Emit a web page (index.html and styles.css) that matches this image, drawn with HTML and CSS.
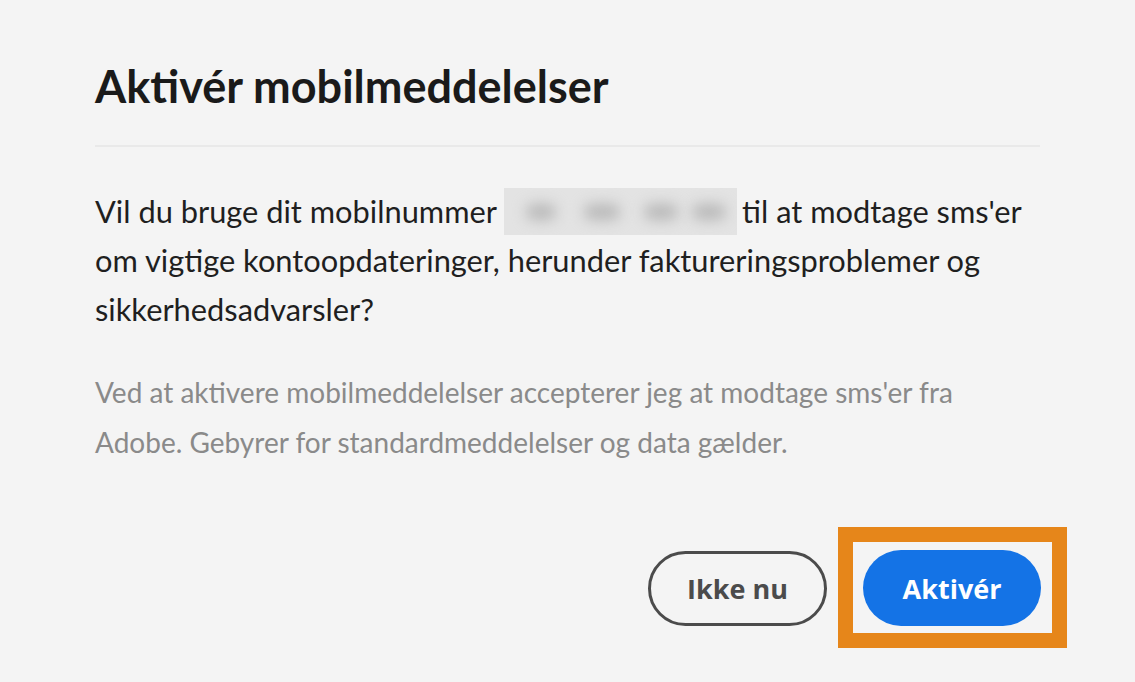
FILE: index.html
```html
<!DOCTYPE html>
<html lang="da">
<head>
    <meta charset="UTF-8">
    <meta name="viewport" content="width=device-width, initial-scale=1.0">
    <title>Aktivér mobilmeddelelser</title>
    <link rel="stylesheet" href="styles.css">
</head>
<body>
    <div class="dialog">
        <h1 class="dialog-title">Aktivér mobilmeddelelser</h1>
        <div class="divider"></div>
        <p class="dialog-text">
            Vil du bruge dit mobilnummer
            <span class="masked"><span class="blob b1"></span><span class="blob b2"></span><span class="blob b3"></span><span class="blob b4"></span></span>
            til at modtage sms'er om vigtige kontoopdateringer, herunder faktureringsproblemer og sikkerhedsadvarsler?
        </p>
        <p class="dialog-note">
            Ved at aktivere mobilmeddelelser accepterer jeg at modtage sms'er fra Adobe. Gebyrer for standardmeddelelser og data gælder.
        </p>
        <div class="dialog-actions">
            <button class="btn btn-outline">Ikke nu</button>
            <div class="highlight">
                <button class="btn btn-primary">Aktivér</button>
            </div>
        </div>
    </div>
</body>
</html>
```

FILE: styles.css
```css
html, body {
    height: 100%;
}
body {
    margin: 0;
    background: #f4f4f4;
    font-family: Lato, "Open Sans", sans-serif;
    color: #1b1b1b;
}
.dialog {
    box-sizing: border-box;
    width: 1135px;
    min-height: 100%;
    padding: 56px 95px 0;
}
.dialog-title {
    margin: 0;
    font-size: 45px;
    font-weight: 700;
    line-height: 60px;
    color: #1a1a1a;
}
.divider {
    height: 2px;
    background: #e9e9e9;
    margin-top: 29px;
}
.dialog-text {
    margin: 40px 0 0;
    font-size: 30.8px;
    line-height: 49px;
    color: #1f1f1f;
}
.masked {
    display: inline-block;
    position: relative;
    width: 233px;
    height: 47px;
    margin: 0 -3px 0 0;
    vertical-align: -12px;
    background: #e3e3e3;
    overflow: hidden;
}
.blob {
    position: absolute;
    top: 16px;
    height: 16px;
    background: #b8b8b8;
    border-radius: 8px;
    filter: blur(7px);
}
.b1 { left: 22px; width: 30px; }
.b2 { left: 80px; width: 36px; }
.b3 { left: 140px; width: 34px; }
.b4 { left: 188px; width: 34px; }
.dialog-note {
    margin: 33px 0 0;
    font-size: 28px;
    line-height: 50px;
    color: #8a8a8a;
}
.dialog-actions {
    display: flex;
    justify-content: flex-end;
    align-items: center;
    gap: 36px;
    margin-top: 83px;
}
.btn {
    height: 76px;
    width: 178px;
    border-radius: 38px;
    font-family: "Open Sans", sans-serif;
    font-size: 27px;
    font-weight: 700;
    cursor: pointer;
}
.btn-outline {
    background: transparent;
    border: 3px solid #4b4b4b;
    color: #4b4b4b;
    height: 75px;
    width: 179px;
}
.btn-primary {
    display: block;
    background: #1473e6;
    border: none;
    color: #fff;
}
.highlight {
    border: 15px solid #e6861a;
    padding: 8px 11px 7px 10px;
    margin: -23px -27px -22px -25px;
}
```
